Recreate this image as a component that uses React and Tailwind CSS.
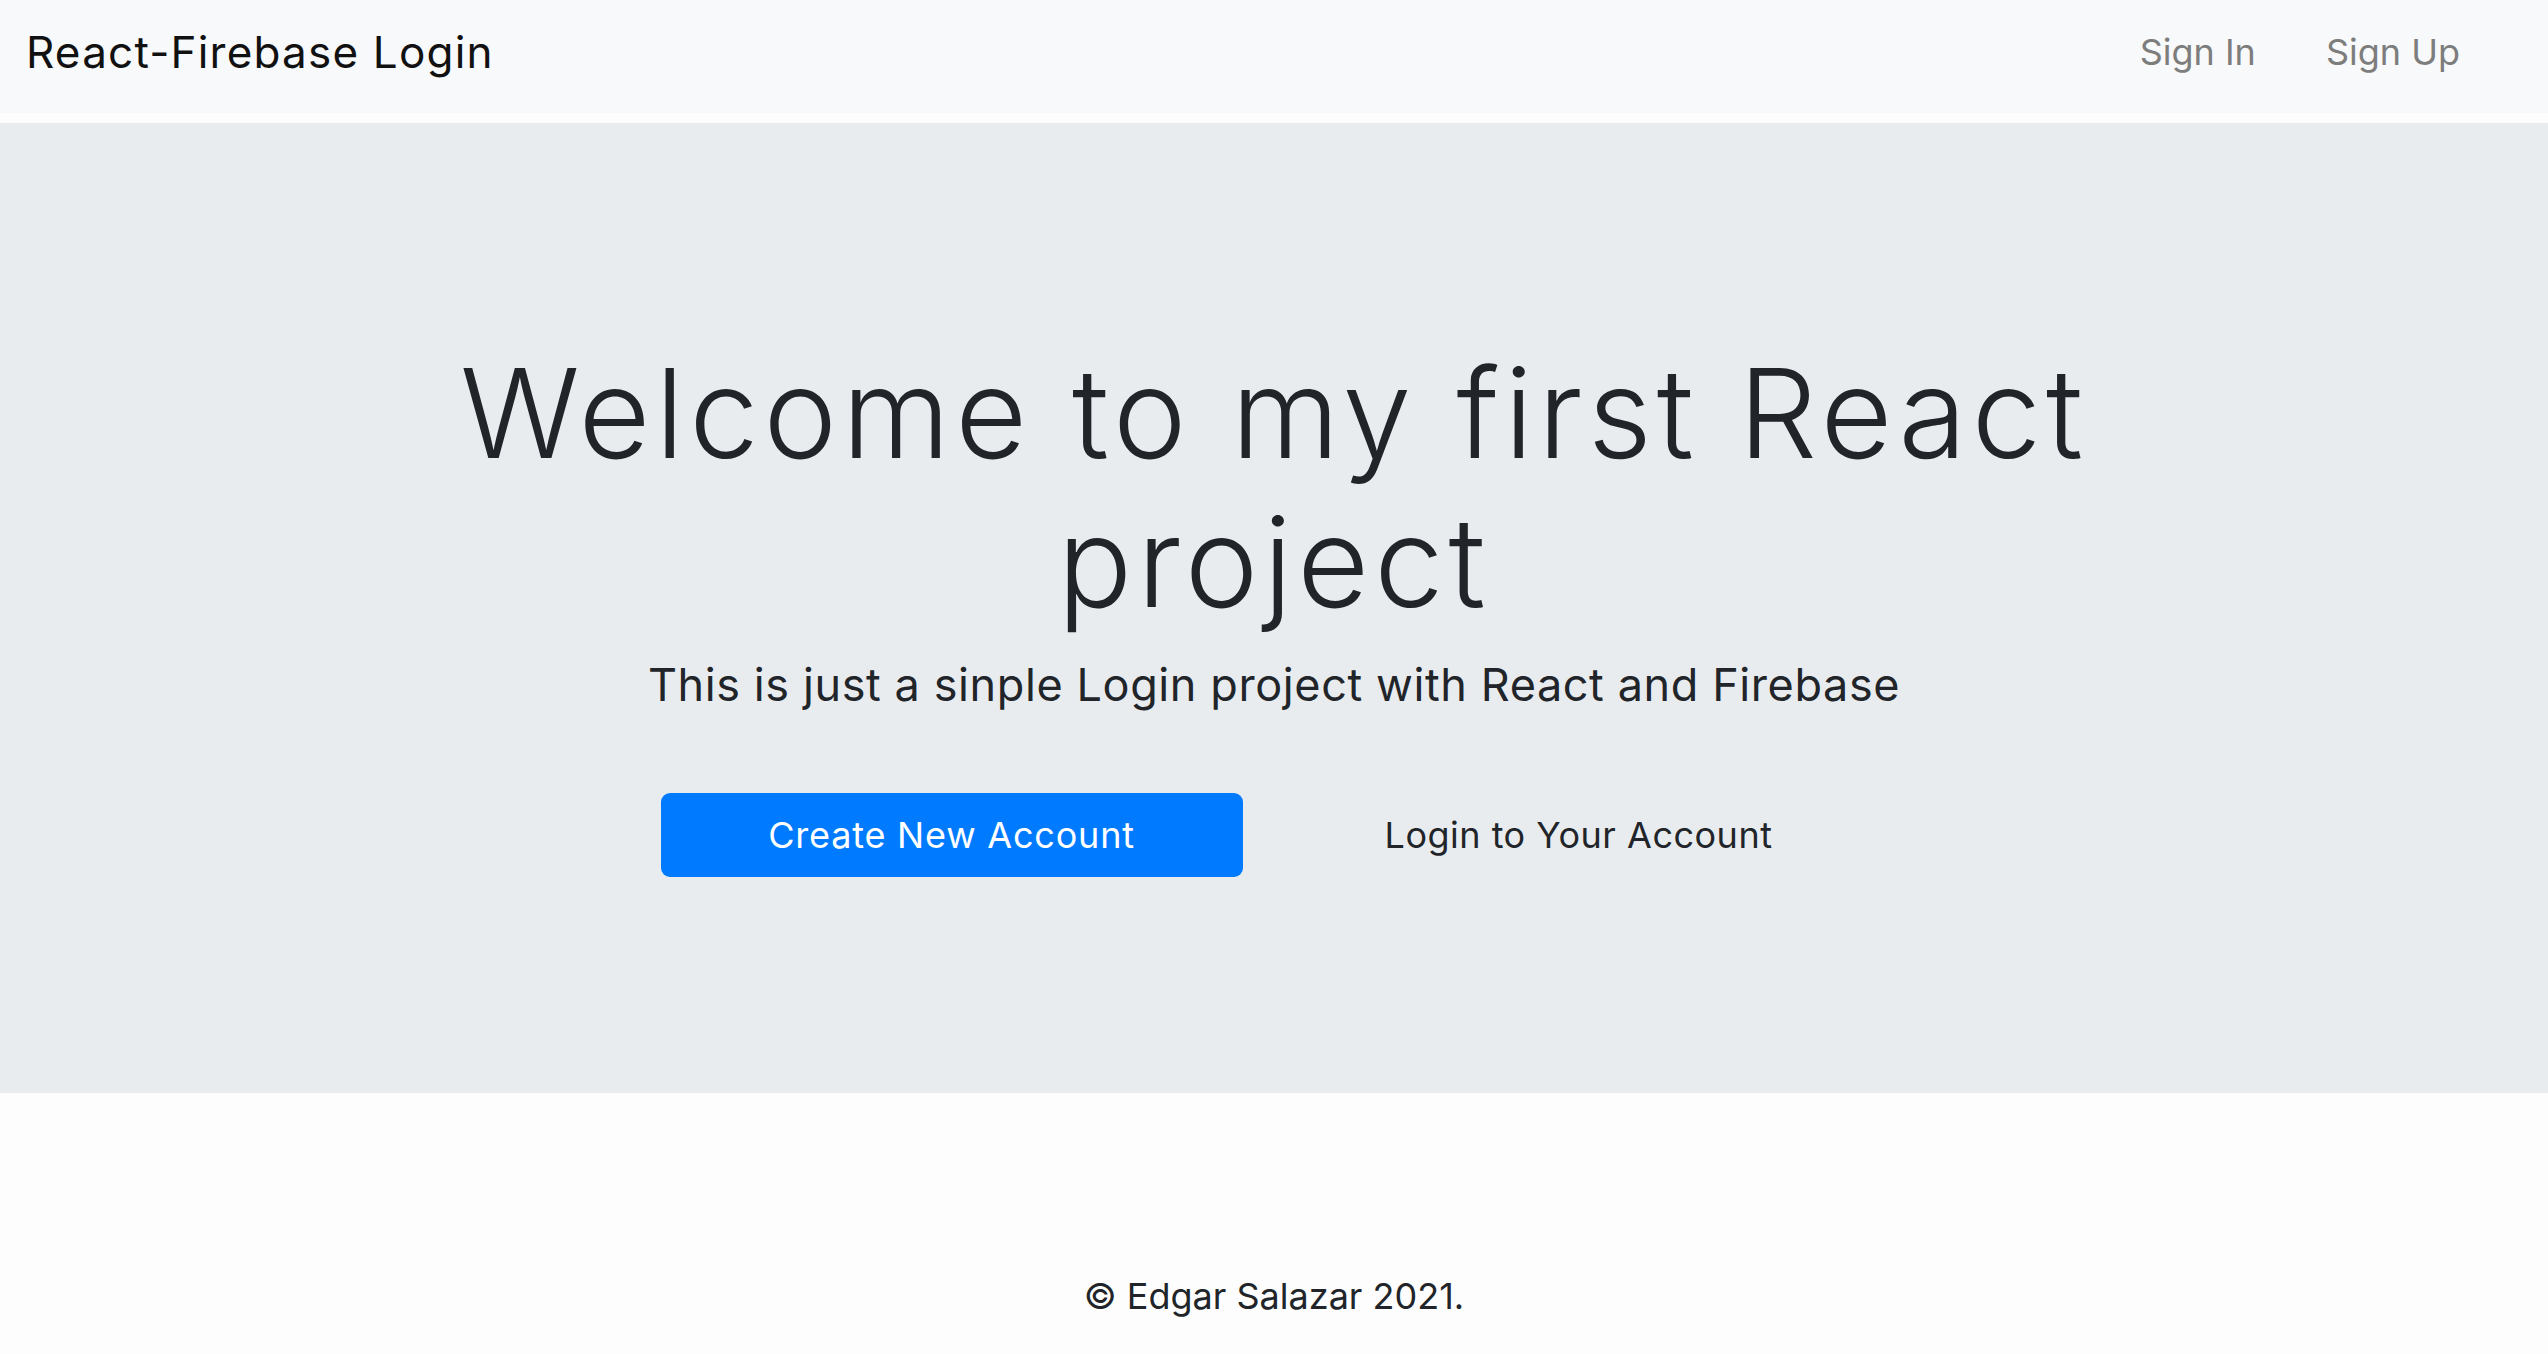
import React from "react";

const FONT = "font-['Inter','Open_Sans',sans-serif]";

export default function App() {
  return (
    <div className={`min-h-screen bg-[#fdfdfd] text-[#212529] ${FONT}`}>
      {/* Navbar */}
      <nav className="h-[113px] bg-[#f8f9fa] flex items-center justify-between pl-[26px] pr-[88px] pb-[10px]">
        <a href="#" className="text-[44px] leading-none text-[#111] tracking-[1.2px]">
          React-Firebase Login
        </a>
        <div className="flex items-center gap-[70px] text-[36px] leading-none text-[#7d7d7d]">
          <a href="#">Sign In</a>
          <a href="#">Sign Up</a>
        </div>
      </nav>

      {/* Jumbotron */}
      <section className="mt-[10px] h-[970px] bg-[#e9ecef] flex flex-col items-center pt-[216px]">
        <h1 className="text-[124px] leading-[149px] font-light text-center max-w-[1800px] tracking-[5px]">
          Welcome to my first React project
        </h1>
        <p className="mt-[20px] text-[45px] leading-tight text-center tracking-[0.6px]">
          This is just a sinple Login project with React and Firebase
        </p>
        <div className="mt-[80px] flex items-center gap-[45px] pr-[18px]">
          <a
            href="#"
            className="w-[582px] h-[84px] rounded-[9px] bg-[#007bff] text-white text-[36px] tracking-[0.8px] flex items-center justify-center"
          >
            Create New Account
          </a>
          <a
            href="#"
            className="w-[582px] h-[84px] text-[36px] tracking-[0.5px] text-[#212529] flex items-center justify-center"
          >
            Login to Your Account
          </a>
        </div>
      </section>

      {/* Footer */}
      <footer className="h-[261px] flex items-end justify-center pb-[40px]">
        <p className="text-[36px] leading-none">© Edgar Salazar 2021.</p>
      </footer>
    </div>
  );
}
